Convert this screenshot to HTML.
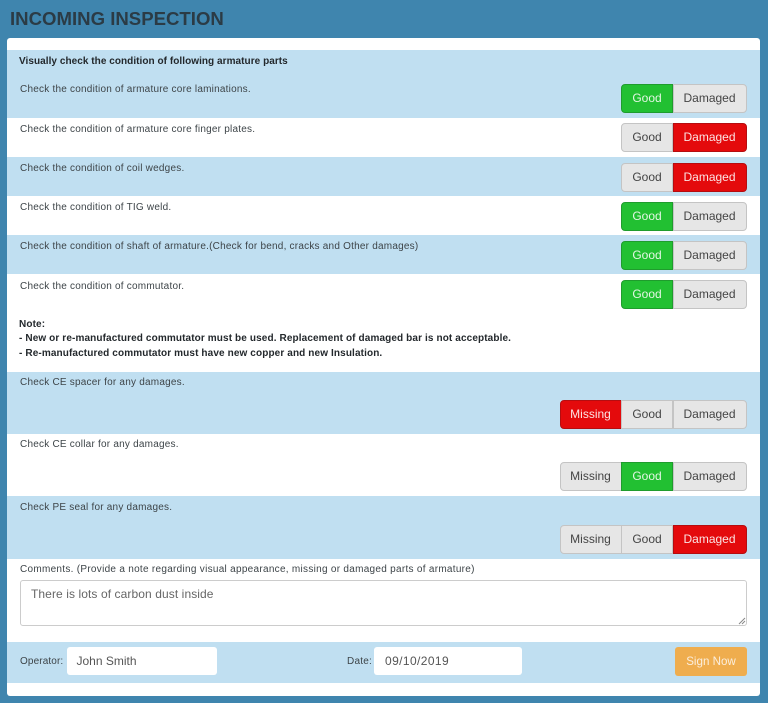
<!DOCTYPE html>
<html>
<head>
<meta charset="utf-8">
<style>
html,body{margin:0;padding:0;}
body{width:768px;height:703px;overflow:hidden;background:#3f85ae;position:relative;font-family:"Liberation Sans",Arial,sans-serif;color:#333;}
div,span{position:absolute;box-sizing:border-box;}
h1{position:absolute;margin:0;left:10px;top:8px;font-size:18.6px;line-height:22px;font-weight:bold;color:#2b3b45;white-space:nowrap;}
.panel{left:7px;top:38px;width:753px;height:658px;background:#fff;border-radius:3px;}
.band{left:7px;width:753px;background:#c0dff1;}
.t{left:20px;font-size:10px;line-height:14px;letter-spacing:.22px;color:#3d4448;white-space:nowrap;}
.b{font-weight:bold;color:#23282c;left:19px;letter-spacing:.12px;}
.btn{height:29px;line-height:27px;font-size:12px;text-align:center;border:1px solid #c4c4c4;background:#e6e6e6;color:#444;white-space:nowrap;}
.g{background:#22c032;border-color:#1f9c2d;color:#e4f6e4;}
.r{background:#e40a0c;border-color:#b50d10;color:#fbe4e4;}
.m{left:559.5px;width:62px;border-radius:4px 0 0 4px;}
.gd{left:621px;width:52px;}
.gf{border-radius:4px 0 0 4px;}
.d{left:672.5px;width:74px;border-radius:0 4px 4px 0;}
.inp{background:#fff;border-radius:3px;font-size:12px;line-height:28px;height:28px;color:#555;white-space:nowrap;}
</style>
</head>
<body>
<h1>INCOMING INSPECTION</h1>
<div class="panel"></div>

<div class="band" style="top:50px;height:68px"></div>
<div class="band" style="top:157px;height:39px"></div>
<div class="band" style="top:235px;height:39px"></div>
<div class="band" style="top:371.5px;height:62px"></div>
<div class="band" style="top:496px;height:62.5px"></div>
<div class="band" style="top:641.5px;height:41px"></div>

<div class="t b" style="top:55px;letter-spacing:.05px">Visually check the condition of following armature parts</div>
<div class="t" style="top:83px">Check the condition of armature core laminations.</div>
<div class="t" style="top:123px">Check the condition of armature core finger plates.</div>
<div class="t" style="top:162px">Check the condition of coil wedges.</div>
<div class="t" style="top:201px">Check the condition of TIG weld.</div>
<div class="t" style="top:240px">Check the condition of shaft of armature.(Check for bend, cracks and Other damages)</div>
<div class="t" style="top:280px">Check the condition of commutator.</div>
<div class="t b" style="top:318px">Note:</div>
<div class="t b" style="top:332px">- New or re-manufactured commutator must be used. Replacement of damaged bar is not acceptable.</div>
<div class="t b" style="top:347px">- Re-manufactured commutator must have new copper and new Insulation.</div>
<div class="t" style="top:376px">Check CE spacer for any damages.</div>
<div class="t" style="top:438px">Check CE collar for any damages.</div>
<div class="t" style="top:501px">Check PE seal for any damages.</div>
<div class="t" style="top:563px;letter-spacing:.285px">Comments. (Provide a note regarding visual appearance, missing or damaged parts of armature)</div>

<div class="btn gd gf g" style="top:84px">Good</div><div class="btn d" style="top:84px">Damaged</div>
<div class="btn gd gf" style="top:123px">Good</div><div class="btn d r" style="top:123px">Damaged</div>
<div class="btn gd gf" style="top:163px">Good</div><div class="btn d r" style="top:163px">Damaged</div>
<div class="btn gd gf g" style="top:202px">Good</div><div class="btn d" style="top:202px">Damaged</div>
<div class="btn gd gf g" style="top:241px">Good</div><div class="btn d" style="top:241px">Damaged</div>
<div class="btn gd gf g" style="top:280px">Good</div><div class="btn d" style="top:280px">Damaged</div>

<div class="btn m r" style="top:400px">Missing</div><div class="btn gd" style="top:400px">Good</div><div class="btn d" style="top:400px">Damaged</div>
<div class="btn m" style="top:462px">Missing</div><div class="btn gd g" style="top:462px">Good</div><div class="btn d" style="top:462px">Damaged</div>
<div class="btn m" style="top:525px">Missing</div><div class="btn gd" style="top:525px">Good</div><div class="btn d r" style="top:525px">Damaged</div>

<div style="left:20px;top:580px;width:727px;height:46px;background:#fff;border:1px solid #ccc;border-radius:3px;font-size:12px;line-height:16px;padding:5px 10px;color:#666;letter-spacing:.09px;white-space:nowrap;">There is lots of carbon dust inside</div>
<svg style="position:absolute;left:738px;top:617px" width="8" height="8" viewBox="0 0 8 8"><path d="M1 7L7 1M4 7L7 4" stroke="#888" stroke-width="1" fill="none"/></svg>

<div class="t" style="top:655px;letter-spacing:.12px">Operator:</div>
<div class="inp" style="left:67px;top:647px;width:150px;padding-left:9.5px">John Smith</div>
<div class="t" style="left:347px;top:655px">Date:</div>
<div class="inp" style="left:374px;top:647px;width:148px;padding-left:11px;letter-spacing:.4px">09/10/2019</div>
<div style="left:675px;top:647px;width:72px;height:29px;background:#efad4e;border-radius:3px;color:#fbeedd;font-size:11.6px;line-height:29px;text-align:center;white-space:nowrap;">Sign Now</div>
</body>
</html>
